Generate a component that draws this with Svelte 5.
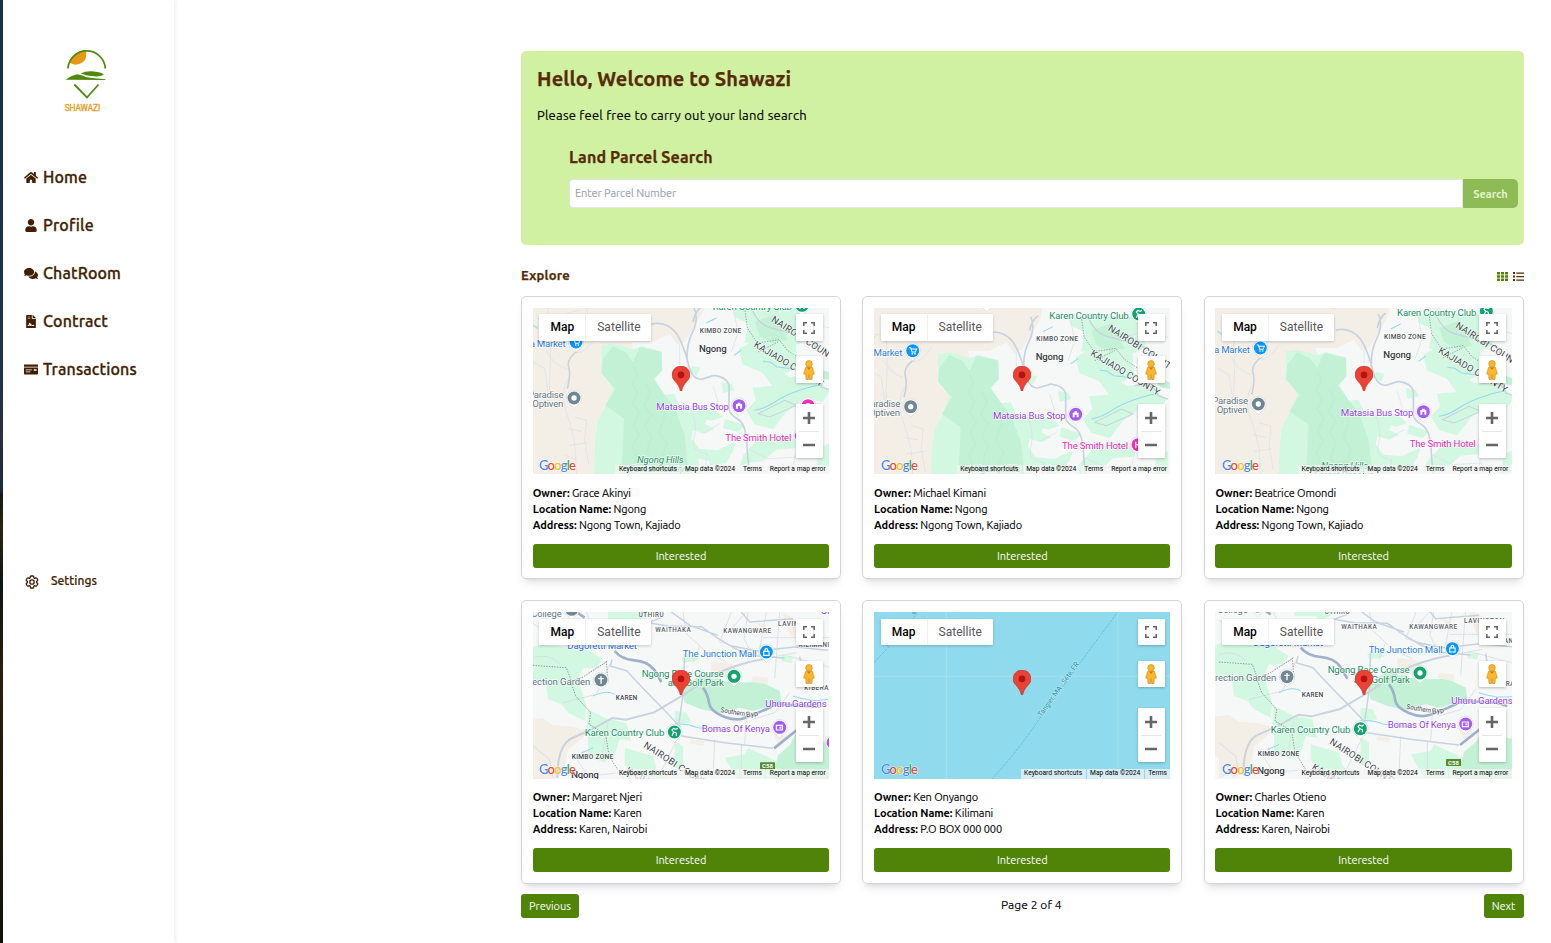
<script>
  const nav = [
    { id: 'home', label: 'Home' },
    { id: 'user', label: 'Profile' },
    { id: 'chat', label: 'ChatRoom' },
    { id: 'file', label: 'Contract' },
    { id: 'card', label: 'Transactions' }
  ];
  const parcels = [
    { owner: 'Grace Akinyi', place: 'Ngong', address: 'Ngong Town, Kajiado', map: 'ngong', dx: 0, dy: 0 },
    { owner: 'Michael Kimani', place: 'Ngong', address: 'Ngong Town, Kajiado', map: 'ngong', dx: -13, dy: 26 },
    { owner: 'Beatrice Omondi', place: 'Ngong', address: 'Ngong Town, Kajiado', map: 'ngong', dx: 7, dy: 18 },
    { owner: 'Margaret Njeri', place: 'Karen', address: 'Karen, Nairobi', map: 'karen', dx: 0, dy: 0 },
    { owner: 'Ken Onyango', place: 'Kilimani', address: 'P.O BOX 000 000', map: 'sea', dx: 0, dy: 0 },
    { owner: 'Charles Otieno', place: 'Karen', address: 'Karen, Nairobi', map: 'karen', dx: 12, dy: -10 }
  ];
</script>

{#snippet poi(x, y, color, kind)}
  <g transform="translate({x} {y})">
    <path d="M0 31L-15 17A23 23 0 1 1 15 17Z" fill="#fff" stroke="#c8ccd0" stroke-width="1.5" />
    <circle r="19.5" fill={color} />
    {#if kind === 'cart'}
      <path d="M-11-9h5l4 13h10l4-9H-4" fill="none" stroke="#fff" stroke-width="3" /><circle cx="-1" cy="9" r="2.5" fill="#fff" /><circle cx="7" cy="9" r="2.5" fill="#fff" />
    {:else if kind === 'dot'}
      <circle r="8" fill="#fff" />
    {:else if kind === 'house'}
      <path fill-rule="evenodd" d="M-9 9V-5h5v-4h8v4h5V9zM-3 9h6V1h-6z" fill="#fff" />
    {:else if kind === 'golf'}
      <path d="M-7 11L-2 0l-5-6 4-5 8 3 5-4M-1 0l7 3v8" fill="none" stroke="#fff" stroke-width="3.5" />
    {:else if kind === 'lock'}
      <path d="M-8-2H8V10H-8zM-4-2v-4a4 4 0 0 1 8 0v4" fill="none" stroke="#fff" stroke-width="3.5" />
    {:else if kind === 'cross'}
      <path d="M0-11V11M-8-4H8" stroke="#fff" stroke-width="4" />
    {:else if kind === 'hotel'}
      <path d="M-7-9V9M7-9V9M-7 0H7" stroke="#fff" stroke-width="4" />
    {:else}
      <path d="M-10-6H8V8H-10z" fill="none" stroke="#fff" stroke-width="3.5" /><circle cx="2" cy="1" r="3" fill="#fff" />
    {/if}
  </g>
{/snippet}

{#snippet ngong()}
  <rect x="-100" y="-100" width="1200" height="800" fill="#f6f7f7" />
  <path d="M-50-50H575L558 52 528 105 500 150 478 158 455 125 405 150H340L346 172 285 163 248 200 252 250 288 292 258 345 236 400 226 700H-50Z" fill="#f4efe6" />
  <path d="M250 160L285 155 345 172 372 163 430 178 433 235 410 262 440 308 468 305 485 340 520 350 570 372 560 395 590 410 560 425 525 415 520 440 545 470 600 475 650 450 645 480 605 512 540 500 560 600 226 600 232 440 238 390 260 345 285 290 250 240Z" fill="#d3f8e2" />
  <path d="M285 163L322 180 345 210 365 165 431 180 432 235 406 262 440 308 470 345 500 430 517 600H308L318 380 262 340 292 290 250 245 254 200Z" fill="#c3f1d5" />
  <g fill="none" stroke="#b9eacd" stroke-width="6" opacity=".4">
    <path d="M345 222l12 25-15 30 18 25-16 32 20 28-18 36 17 30-20 35 20 60M382 275l15 30-18 35 22 30-20 32 20 35-16 40 22 45M425 330l15 40-16 50 22 35-18 50" />
  </g>
  <g fill="#d3f8e2">
    <path d="M642 48H835L870 76 870 145 833 158 840 225 800 245 755 210 710 155 680 152 690 95 650 75Z" />
    <path d="M663 170l35-20 40 18 32 55 45 32 60-5 60 45-20 35-55-10-55 40-40 52-55-15-25-42 28-30-10-38 60-5-30-40-60-25Z" />
    <path d="M522 222l25 5-12 25-20-15zM540 345l50 10 25 20-35 12-40-15zM620 380l60 20-20 20-45-12zM675 490l50-55 50-10 70 18-10 25-60 5-40 35-45 5-25 12z" />
    <path d="M575 498l35-30 45-15-30 60-50 10zM905 470l35-20v70l-45 10zM610 270l30 5 10 20-35 8z" />
  </g>
  <g fill="#c3f1d5"><path d="M710 90l60-22 40 75-45 10-40-20zM900 230l45 15v20l-30-5z" /></g>
  <g fill="none" stroke="#dadee6" stroke-width="2">
    <path d="M45 100q40 10 70-15t70-30M145 230q-40-12-60-55M150 260q-25 40-8 90t28 100l8 130M172 375l34 10-6 60 12 70M150 410l40 8M155 460l55-8M140 490l35 12M45 210l35 20 10 70M90 48l8 120-4 130M205 48l15 60-40 40M230 140q-35 55-60 40M485 155v70M520 350q20 50 8 90t40 45l-10 60M560 420l45-25M600 330l-15-50M810 110l60-20 70 20M690 470l60 30 90-5M820 546l20-90M640 180l20-60-15-75" />
  </g>
  <g fill="none" stroke="#c8d3df" stroke-width="5">
    <path d="M180 175q-35 25-28 50t-4 65M400 97q25-8 50 5t40 50 20 60q10 50 40 50l38-12q40 5 45 30l0 70q0 15 25 30t28 70 9 90M508 212q-5-50 15-90t5-74M525 90q5-30 25-45" />
    <path d="M700 48q20 50 60 60t90 25 40 35M840 255q60-10 70 30l30 10" stroke-width="4" />
  </g>
  <g fill="none" stroke="#94daec" stroke-width="3">
    <path d="M710 355q30-5 60-25t75-35 65-15M45 100l15 10M565 93l30-15M648 190l22-16M735 208l22 3 20 14 60 7" />
  </g>
  <path d="M680 48l8 60 30 45 65-10 25 32 45 30M720 180l60-30" fill="none" stroke="#8b8f92" stroke-width="2.5" stroke-dasharray="4 4" />
  <path d="M720 365l80-40 35 15-80 35Z" fill="none" stroke="#c8d3df" stroke-width="3" />
  <g class="lbl">
    <text x="545" y="122" font-size="20" font-weight="500" fill="#4b5157" textLength="125">KIMBO ZONE</text>
    <text x="543" y="179" font-size="29" font-weight="500" fill="#33383d" textLength="83">Ngong</text>
    <text x="35" y="165" font-size="29" fill="#2b7de0" textLength="108">a Market</text>
    <text x="30" y="319" font-size="29" fill="#617582" textLength="107">Paradise</text>
    <text x="43" y="346" font-size="29" fill="#617582" textLength="93">Optiven</text>
    <text x="584" y="54" font-size="29" fill="#1b8f64" textLength="238">Karen Country Club</text>
    <text x="415" y="354" font-size="29" fill="#9544dd" textLength="218">Matasia Bus Stop</text>
    <text x="622" y="446" font-size="29" fill="#e62ab5" textLength="198">The Smith Hotel</text>
    <text x="357" y="514" font-size="29" font-style="italic" fill="#249069" textLength="140">Ngong Hills</text>
    <text x="335" y="541" font-size="29" font-style="italic" fill="#249069" textLength="180">Forest Reserve</text>
    <text transform="translate(758 87) rotate(33)" font-size="28" fill="#41474d" textLength="236">NAIROBI COUNTY</text>
    <text transform="translate(706 163) rotate(31)" font-size="28" fill="#41474d" textLength="236">KAJIADO COUNTY</text>
  </g>
  {@render poi(174, 150, '#0795ff', 'cart')}
  {@render poi(168, 318, '#6f8793', 'dot')}
  {@render poi(852, 40, '#12a36f', 'golf')}
  {@render poi(663, 341, '#a45cf5', 'house')}
  {@render poi(850, 432, '#f12fbd', 'hotel')}
  {@render poi(397, 2, '#f12fbd', 'dot')}
  {@render poi(870, 341, '#f12fbd', 'dot')}
{/snippet}

{#snippet karen()}
  <rect x="-100" y="-100" width="1200" height="800" fill="#f6f7f7" />
  <g fill="#d3f8e2">
    <path d="M30 160L65 145 150 155 215 165 255 190 235 215 195 215 180 250 205 330 200 375 150 350 130 325 90 310 85 270 30 245Z" />
    <path d="M270 30h70v40h-70zM325 55l60-20 20 15-55 40zM490 185l45-12 5 20-45 8zM790 175l35 8-5 18-30-5zM210 340l60 30 55 10 15 55-35-5-20 65-60-30 20-50-40-20zM210 420l45-20 40 60-35 40-50-20z" />
    <path d="M320 455l85 25 10 38 40 40h-90l-45-55zM470 345l35 5 15 30-50 5zM470 435l25 15 0 50-20 20-15-25 10-20zM620 485l60-10 100 20 60 60h-180zM690 455l75 35-20 10-65-25z" />
  </g>
  <path d="M490 278L550 235 590 245 640 260 730 258 785 285 790 320 705 345 665 335 610 352 550 340 500 320Z" fill="#c3f1d5" />
  <path d="M848 385l40-12v55l45 15v130H758l22-95 35-30Z" fill="#c3f1d5" />
  <g fill="#f4efe6">
    <path d="M30 372l45-5 30 20 60 5 50 15-65 55-12 70-50 25-58-75ZM45 430l40 20 40 85-80 20zM580 250l0-55 60 8 20 25-30 15zM715 78l30 10-15 12zM790 48l60 30 5 50-40-10zM705 240l45 5v20l-50-8zM520 430l40 5-5 15-40-8zM760 405l50 20-30 15z" />
  </g>
  <g fill="none" stroke="#d5dae4" stroke-width="2.3">
    <path d="M45 82l50 35 50-18M205 48l12 30M495 48l10 65 60 55 60 30M630 110l55-62M640 48l-35 90 90 25M690 48l-12 80 30 60M745 48l-20 110M785 48l-15 200M45 185q50-15 80 20M220 90l-5 70M270 195l-60 35M275 205l-40 90-100 25M545 150l-20 50M725 190l110-20M735 125h200M670 445l0 100M480 385l-10 60-45 90M590 430l-5 115M685 355l-5 90M170 480l40 60 100-10M270 380l-20 110M815 290l-45 60-65 20M810 180l130 35M45 450l50 40 10 56" />
  </g>
  <g fill="none" stroke="#c8d3df" stroke-width="4.500">
    <path d="M282 190l-5 20 50 15q45 50 105 110l55 58M500 175l-5 120-12 85M430 65l-40 15 60 10 100 2 50 35 50 30 60 22 90 8M460 48l55 40 85 30M640 150l80 15 110-12 100 10M490 420l130 20 145 17" />
    <path d="M670 48l25 30 130-10M845 182l10 70 80 30" />
    <path d="M118 546q0-100 45-120t65-30l55-30 40 5 85-22 85-50 55-37q75-55 200-75" stroke-width="6" />
  </g>
  <g fill="none" stroke="#9fb0cc" stroke-width="8">
    <path d="M178 50l22 15M290 165q20 25 60 28t60 30l20 35M555 275q15 20 18 45t40 40 60 8 75-30 30-18 100 10l32 10M768 457l75-60 18-18" />
  </g>
  <g fill="none" stroke="#777" stroke-width="2.3" stroke-dasharray="4 4">
    <path d="M45 208l100 7 15 40 35-12 70-45M155 250l18 50 45 50-5 35 50 30 10 65 45 70M265 195l5 60" />
  </g>
  <path d="M225 300q40-20 65-5M470 385q35-5 70 10l80 8M190 470q20-5 35-15M825 300q60 20 105 10" fill="none" stroke="#94daec" stroke-width="3" />
  <g class="lbl">
    <text x="40" y="62" font-size="28" fill="#617582" textLength="91">College</text>
    <text x="362" y="63" font-size="19" font-weight="500" fill="#5a6066" textLength="75">UTHIRU</text>
    <text x="412" y="108" font-size="19" font-weight="500" fill="#5a6066" textLength="106">WAITHAKA</text>
    <text x="616" y="110" font-size="19" font-weight="500" fill="#5a6066" textLength="143">KAWANGWARE</text>
    <text x="780" y="90" font-size="19" font-weight="500" fill="#5a6066" textLength="120">LAVINGTON</text>
    <text x="842" y="152" font-size="19" font-weight="500" fill="#5a6066" textLength="92">KILIMANI</text>
    <text x="859" y="281" font-size="19" font-weight="500" fill="#5a6066" textLength="72">KIBERA</text>
    <text x="293" y="312" font-size="20" font-weight="500" fill="#41474d" textLength="65">KAREN</text>
    <text x="161" y="490" font-size="20" font-weight="500" fill="#41474d" textLength="125">KIMBO ZONE</text>
    <text x="160" y="545" font-size="29" font-weight="500" fill="#33383d" textLength="82">Ngong</text>
    <text x="148" y="160" font-size="29" fill="#2b6fe0" textLength="209">Dagoretti Market</text>
    <text x="494" y="182" font-size="29" fill="#2b7de0" textLength="222">The Junction Mall</text>
    <text x="33" y="266" font-size="29" fill="#617582" textLength="184">rection Garden</text>
    <text x="371" y="242" font-size="29" fill="#1b8f64" textLength="246">Ngong Race Course</text>
    <text x="449" y="270" font-size="29" fill="#1b8f64" textLength="169">and Golf Park</text>
    <text x="200" y="421" font-size="29" fill="#1b8f64" textLength="239">Karen Country Club</text>
    <text x="551" y="407" font-size="29" fill="#9544dd" textLength="205">Bomas Of Kenya</text>
    <text x="742" y="333" font-size="29" fill="#9544dd" textLength="184">Uhuru Gardens</text>
    <text x="909" y="53" font-size="29" fill="#9544dd">Uni</text>
    <text transform="translate(607 348) rotate(10)" font-size="21" fill="#41474d" textLength="74" lengthAdjust="spacingAndGlyphs">Southern</text>
    <text transform="translate(685 363) rotate(-7)" font-size="21" fill="#41474d" textLength="36">Byp</text>
    <text transform="translate(375 452) rotate(33)" font-size="28" fill="#41474d" textLength="236">NAIROBI COUNTY</text>
    <text transform="translate(322 528) rotate(31)" font-size="28" fill="#41474d" textLength="236">KAJIADO COUNTY</text>
  </g>
  <rect x="726" y="499" width="45" height="21" rx="2" fill="#568a2f" />
  <text x="732" y="516" font-size="18" font-weight="700" fill="#fff">C58</text>
  {@render poi(161, 40, '#6f8793', 'dot')}
  {@render poi(745, 168, '#0795ff', 'lock')}
  {@render poi(249, 252, '#6f8793', 'cross')}
  {@render poi(648, 241, '#12a36f', 'dot')}
  {@render poi(469, 408, '#12a36f', 'golf')}
  {@render poi(785, 394, '#a45cf5', 'cam')}
  {@render poi(945, 440, '#a45cf5', 'dot')}
{/snippet}

{#snippet sea()}
  <rect x="0" y="0" width="1000" height="600" fill="#90daee" />
  <path d="M262 40V560M776 40V560M40 241H940" stroke="#a7dfeb" stroke-width="3" />
  <path d="M400 548Q480 460 540 370L665 198 776 48M45 200L120 120 175 50" fill="none" stroke="#55b9d6" stroke-width="2.2" stroke-dasharray="9 3" />
  <text transform="translate(547 364) rotate(-54.5)" font-size="22" fill="#2692ae" stroke="#b6e7f1" stroke-width="4" paint-order="stroke" textLength="196">Tangier, MA - Sète, FR</text>
  <text x="158" y="54" font-size="18" fill="#2692ae">G</text>
{/snippet}

<div class="page">
  <div class="edge"></div>
  <aside>
    <svg class="logo" viewBox="50 40 70 80" width="70" height="80">
      <path d="M69 62.500A18.700 18.700 0 0 1 85.500 50.200Q88 57.500 83 62 76 67 69 62.500Z" fill="#e69812" />
      <path d="M68 68.500A18.660 18.200 0 0 1 105.300 68.500" fill="none" stroke="#4f8a0b" stroke-width="1.7" />
      <path d="M80.500 73.500Q87 70.500 94 71.500 101 72 104 74.500 100 77 94 76.300 87 76 80.500 73.500ZM65.500 79.800Q71 75.500 77 74.300 82 74.800 86 77 94 78.600 105.500 79.200V79.900Z" fill="#4f8a0b" />
      <path d="M74.300 84.500L87 97.500 98.500 84.500" fill="none" stroke="#4f8a0b" stroke-width="1.8" />
      <text x="64.700" y="111.300" font-family="Roboto, sans-serif" font-size="8.600" fill="#e69812" stroke="#e69812" stroke-width=".3" textLength="35.500" lengthAdjust="spacingAndGlyphs">SHAWAZI</text>
    </svg>
    <nav>
      {#each nav as item}
        <a href="#{item.id}">
          {#if item.id === 'home'}
            <svg viewBox="0 0 576 512"><path d="M280.370 148.260L96 300.110V464a16 16 0 0 0 16 16l112.060-.29a16 16 0 0 0 15.920-16V368a16 16 0 0 1 16-16h64a16 16 0 0 1 16 16v95.640a16 16 0 0 0 16 16.050L464 480a16 16 0 0 0 16-16V300L295.670 148.260a12.190 12.190 0 0 0-15.300 0zM571.600 251.470L488 182.560V44.050a12 12 0 0 0-12-12h-56a12 12 0 0 0-12 12v72.610L318.470 43a48 48 0 0 0-61 0L4.340 251.470a12 12 0 0 0-1.600 16.900l25.500 31A12 12 0 0 0 45.150 301l235.220-193.740a12.190 12.190 0 0 1 15.300 0L530.900 301a12 12 0 0 0 16.900-1.600l25.500-31a12 12 0 0 0-1.700-16.930z" /></svg>
          {:else if item.id === 'user'}
            <svg viewBox="0 0 448 512"><path d="M224 256c70.700 0 128-57.300 128-128S294.700 0 224 0 96 57.300 96 128s57.300 128 128 128zm89.600 32h-16.700c-22.200 10.200-46.900 16-72.900 16s-50.600-5.800-72.900-16h-16.700C60.200 288 0 348.200 0 422.400V464c0 26.500 21.500 48 48 48h352c26.500 0 48-21.500 48-48v-41.600c0-74.200-60.200-134.400-134.400-134.400z" /></svg>
          {:else if item.id === 'chat'}
            <svg viewBox="0 0 576 512"><path d="M416 192c0-88.400-93.100-160-208-160S0 103.600 0 192c0 34.300 14.100 65.900 38 92-13.400 30.200-35.500 54.200-35.800 54.500-2.200 2.300-2.800 5.700-1.500 8.700S4.800 352 8 352c36.600 0 66.900-12.300 88.700-25 32.200 15.700 70.300 25 111.300 25 114.900 0 208-71.600 208-160zm122 220c23.900-26 38-57.700 38-92 0-66.900-53.500-124.200-129.300-148.100.9 6.600 1.300 13.300 1.300 20.100 0 105.900-107.700 192-240 192-10.800 0-21.300-.8-31.700-1.900C207.800 439.600 281.800 480 368 480c41 0 79.100-9.200 111.300-25 21.800 12.700 52.100 25 88.700 25 3.200 0 6.100-1.900 7.300-4.800 1.300-2.900.7-6.300-1.500-8.700-.3-.3-22.400-24.200-35.800-54.500z" /></svg>
          {:else if item.id === 'file'}
            <svg viewBox="0 0 384 512"><path fill-rule="evenodd" d="M224 136V0H24C10.700 0 0 10.700 0 24v464c0 13.300 10.700 24 24 24h336c13.300 0 24-10.700 24-24V160H248c-13.200 0-24-10.800-24-24zM64 64h96v24H64zM64 128h96v24H64zM64 430v-32h30l30-92h36l24 60 30 4 22 28h84v32h-100l-26-32-16 32h-40l-24-48-16 48z" /><path d="M377 105L279.100 7c-4.500-4.500-10.600-7-17-7H256v128h128v-6.100c0-6.300-2.500-12.400-7-16.900z" /></svg>
          {:else}
            <svg viewBox="0 0 640 512"><path fill-rule="evenodd" d="M0 448c0 17.700 14.300 32 32 32h576c17.700 0 32-14.300 32-32V160H0zm448-208h128v72H448zm-368 16h280v32H80zm0 96h210v32H80zM624 32H16C7.200 32 0 39.200 0 48v80h640V48c0-8.800-7.200-16-16-16z" /></svg>
          {/if}
          <span>{item.label}</span>
        </a>
      {/each}
    </nav>
    <a class="settings" href="#settings">
      <svg viewBox="0 0 24 24" fill="none" stroke="currentColor" stroke-width="2"><path d="M9.594 3.940c.09-.542.56-.94 1.110-.94h2.593c.55 0 1.020.398 1.110.94l.213 1.281c.063.374.313.686.645.87.074.04.147.083.22.127.325.196.72.257 1.075.124l1.217-.456a1.125 1.125 0 0 1 1.370.49l1.296 2.247a1.125 1.125 0 0 1-.26 1.431l-1.003.827c-.293.241-.438.613-.43.992a7.723 7.723 0 0 1 0 .255c-.008.378.137.75.43.991l1.004.827c.424.35.534.955.26 1.430l-1.298 2.247a1.125 1.125 0 0 1-1.369.491l-1.217-.456c-.355-.133-.75-.072-1.076.124a6.470 6.470 0 0 1-.22.128c-.331.183-.581.495-.644.869l-.213 1.281c-.09.543-.56.94-1.110.94h-2.594c-.55 0-1.019-.398-1.110-.94l-.213-1.281c-.062-.374-.312-.686-.644-.87a6.520 6.520 0 0 1-.22-.127c-.325-.196-.72-.257-1.076-.124l-1.217.456a1.125 1.125 0 0 1-1.369-.49l-1.297-2.247a1.125 1.125 0 0 1 .26-1.431l1.004-.827c.292-.24.437-.613.43-.991a6.932 6.932 0 0 1 0-.255c.007-.38-.138-.751-.43-.992l-1.004-.827a1.125 1.125 0 0 1-.26-1.430l1.297-2.247a1.125 1.125 0 0 1 1.370-.491l1.216.456c.356.133.751.072 1.076-.124.072-.044.146-.086.22-.128.332-.183.582-.495.644-.869l.214-1.280Z" /><circle cx="12" cy="12" r="3.300" /></svg>
      <span>Settings</span>
    </a>
  </aside>

  <main>
    <section class="banner">
      <h1>Hello, Welcome to Shawazi</h1>
      <p>Please feel free to carry out your land search</p>
      <h2>Land Parcel Search</h2>
      <div class="search">
        <input placeholder="Enter Parcel Number" />
        <button>Search</button>
      </div>
    </section>

    <div class="explore">
      <h3>Explore</h3>
      <div class="views">
        <svg width="11" height="9" viewBox="0 0 11 9" fill="#4f8409"><path d="M0 0h3v2.500H0zM4 0h3v2.500H4zM8 0h3v2.500H8zM0 3.250h3v2.500H0zM4 3.250h3v2.500H4zM8 3.250h3v2.500H8zM0 6.500h3V9H0zM4 6.500h3V9H4zM8 6.500h3V9H8z" /></svg>
        <svg width="11" height="9" viewBox="0 0 11 9" fill="#562b05"><path d="M0 0h2v2H0zM0 3.500h2v2H0zM0 7h2v2H0zM3.300.4H11v1.300H3.300zM3.300 3.900H11v1.300H3.300zM3.300 7.400H11v1.300H3.300z" /></svg>
      </div>
    </div>

    <div class="grid">
      {#each parcels as p}
        <article>
          <div class="map">
            <svg class="terrain" viewBox="45 48 889 500" preserveAspectRatio="xMinYMin slice">
              <g transform="translate({p.dx} {p.dy})">
                {#if p.map === 'ngong'}{@render ngong()}{:else if p.map === 'karen'}{@render karen()}{:else}{@render sea()}{/if}
              </g>
            </svg>
            <svg class="pin" viewBox="0 0 27 38"><path d="M13.500 0C5.800 0 0 6 0 13.300 0 22 10.500 25 12.300 37q1.200 2 2.400 0C16.500 25 27 22 27 13.300 27 6 21.200 0 13.500 0Z" fill="#ea4335" stroke="#c5221f" stroke-width=".8" /><circle cx="13.500" cy="13.300" r="5" fill="#b31412" /></svg>
            <div class="types"><b>Map</b><span>Satellite</span></div>
            <div class="ctl full"><svg width="12" height="12" viewBox="0 0 12 12" fill="none" stroke="#666" stroke-width="1.600"><path d="M.8 4V.8H4M8 .8h3.200V4M11.200 8v3.200H8M4 11.200H.8V8" /></svg></div>
            <div class="ctl peg"><svg width="12" height="20" viewBox="0 0 12 20" fill="#fbb829" stroke="#c88514" stroke-width=".6"><path d="M2.500 7.500Q6 5.500 9.500 7.500L11.300 14 9.300 14.500 9 19.500H6.500V15h-1v4.500H3L2.700 14.500.7 14Z" /><circle cx="6" cy="3.800" r="3.300" /><path d="M4 7.500h4L6 10z" fill="#e8701a" stroke="none" /></svg></div>
            <div class="ctl zoom"><svg width="27" height="54" viewBox="0 0 27 54"><path d="M7 14h12M13 8v12M7 41h12" stroke="#666" stroke-width="2.600" /><path d="M3 27.500h20" stroke="#e6e6e6" /></svg></div>
            <svg class="google" width="40" height="16" viewBox="0 0 40 16"><text y="11.500" stroke="#fff" stroke-opacity=".7" stroke-width="1" paint-order="stroke" font-size="13" font-weight="500" font-family="Lato, sans-serif" textLength="37"><tspan fill="#4285f4">G</tspan><tspan fill="#ea4335">o</tspan><tspan fill="#fbbc04">o</tspan><tspan fill="#4285f4">g</tspan><tspan fill="#34a853">l</tspan><tspan fill="#ea4335">e</tspan></text></svg>
            <div class="legal">
              <span>Keyboard shortcuts</span><span>Map data ©2024</span><span>Terms</span>{#if p.map !== 'sea'}<span>Report a map error</span>{/if}
            </div>
          </div>
          <dl>
            <div><dt>Owner:</dt> <dd>{p.owner}</dd></div>
            <div><dt>Location Name:</dt> <dd>{p.place}</dd></div>
            <div><dt>Address:</dt> <dd>{p.address}</dd></div>
          </dl>
          <button>Interested</button>
        </article>
      {/each}
    </div>

    <footer>
      <button class="prev">Previous</button>
      <span>Page 2 of 4</span>
      <button class="next">Next</button>
    </footer>
  </main>
</div>

<style>
  :global(body) { margin: 0; background: #fff; }
  * { box-sizing: border-box; }
  .page { display: flex; height: 943px; overflow: hidden; font-family: Ubuntu, "Noto Sans", sans-serif; color: #000; }
  .edge { width: 3px; background: linear-gradient(#17304c 0, #1c3550 38%, #2c3040 46%, #1d2b40 52%, #171b16 52.500%, #29260f 56%, #0f1514 62%, #2a210b 72%, #12120d 100%); }
  aside { width: 171px; background: #fff; box-shadow: 1px 0 5px rgba(0, 0, 0, .08); display: flex; flex-direction: column; }
  .logo { margin: 40px 0 0 47px; flex: none; }
  nav { margin-top: 45px; display: flex; flex-direction: column; gap: 24px; padding-left: 21px; }
  nav a { height: 24px; display: flex; align-items: center; color: #401f03; text-decoration: none; font-size: 16px; font-weight: 500; line-height: 24px; white-space: nowrap; }
  nav svg { width: 14px; height: 13px; margin: 1px 5px 0 0; fill: currentColor; }
  nav span { letter-spacing: .13px; -webkit-text-stroke: .3px currentColor; }
  .settings { display: flex; align-items: center; height: 20px; margin: 189px 0 0 21px; color: #401f03; text-decoration: none; font-size: 12px; font-weight: 500; }
  .settings svg { width: 16px; height: 16px; margin: 3px 11px 0 0; }
  .settings span { -webkit-text-stroke: .2px currentColor; letter-spacing: .05px; }
  main { width: 1002.600px; margin: 51px 0 0 347px; flex: none; }
  .banner { height: 194px; background: #d0f1a2; border-radius: 5px; padding: 14px 5.600px 0 16px; }
  h1, h2, h3, p, dl, dd { margin: 0; }
  h1, h2, h3 { color: #562b05; font-weight: 700; -webkit-text-stroke: .25px currentColor; }
  h1 { font-size: 20px; line-height: 28px; letter-spacing: .14px; }
  p { font-size: 13px; line-height: 20px; margin-top: 12px; letter-spacing: .22px; -webkit-text-stroke: .15px currentColor; }
  h2 { font-size: 16px; line-height: 24px; margin: 20px 0 0 32px; letter-spacing: .13px; }
  .search { display: flex; height: 29px; margin: 10px 0 0 32px; }
  input { flex: 1; min-width: 0; border: 1px solid #e2e5e9; border-radius: 4px 0 0 4px; padding: 0 5px 2px; font: 11px Ubuntu, "Noto Sans", sans-serif; letter-spacing: -.08px; }
  input::placeholder { color: #9ca3af; -webkit-text-stroke: .12px currentColor; }
  button { border: 0; padding: 0; font: 11px Ubuntu, "Noto Sans", sans-serif; color: #fff; background: #4f8409; border-radius: 3px; letter-spacing: -.06px; }
  .search button { width: 55px; border-radius: 0 5px 5px 0; background: #8fbb56; color: #e1f5c8; font-weight: 700; }
  .explore { display: flex; justify-content: space-between; align-items: center; height: 20px; margin: 20px 0 11px; }
  h3 { font-size: 13px; line-height: 20px; letter-spacing: .25px; }
  .views { display: flex; gap: 5px; padding-top: 3px; }
  .grid { display: grid; grid-template-columns: repeat(3, 1fr); gap: 21.100px 21.330px; }
  article { height: 283.300px; min-width: 0; border: 1px solid #d1d5db; border-radius: 5px; padding: 11px 10.800px; box-shadow: 0 7px 10px -3px rgba(0, 0, 0, .1), 0 3px 4px -3px rgba(0, 0, 0, .1); }
  .map { position: relative; height: 166.400px; overflow: hidden; font-family: Roboto, sans-serif; }
  .terrain { display: block; width: 100%; height: 100%; }
  .lbl { stroke: #fff; stroke-opacity: .75; stroke-width: 4px; paint-order: stroke; }
  .pin { position: absolute; left: 139.400px; top: 57.500px; width: 18px; height: 25.500px; }
  .types { position: absolute; left: 6.600px; top: 6.300px; height: 26.700px; display: flex; background: #fff; border-radius: 1px; box-shadow: 0 1px 3px rgba(0, 0, 0, .2); font-size: 12px; line-height: 27px; color: #565656; }
  .types b { width: 47px; text-align: center; font-weight: 500; color: #000; border-right: 1px solid #f0f0f0; }
  .types span { width: 65px; text-align: center; letter-spacing: .05px; }
  .ctl { position: absolute; right: 5.900px; width: 27px; height: 26.700px; background: #fff; border-radius: 1px; box-shadow: 0 1px 3px rgba(0, 0, 0, .25); display: flex; align-items: center; padding-left: 7px; }
  .full { top: 6.300px; }
  .peg { top: 48.300px; }
  .zoom { top: 96.100px; height: 54px; padding: 0; }
  .google { position: absolute; left: 6.700px; bottom: .7px; overflow: visible; }
  .legal { position: absolute; right: 0; bottom: -.4px; height: 10px; display: flex; gap: 1px; font-size: 6.700px; line-height: 9.500px; color: #000; white-space: nowrap; }
  .legal span { background: rgba(245, 245, 245, .7); padding: 0 3.500px; }
  dl { font-size: 11px; line-height: 16px; margin-top: 10.600px; letter-spacing: -.12px; }
  dl div { height: 16px; white-space: nowrap; }
  dt, dd { display: inline; }
  dt { font-weight: 700; }
  dd { -webkit-text-stroke: .1px currentColor; }
  article > button { display: block; width: 100%; height: 24px; margin-top: 11px; }
  footer { display: flex; justify-content: space-between; align-items: center; height: 24px; margin-top: 10.300px; font-size: 12px; }
  footer button { height: 24px; }
  footer span { letter-spacing: .05px; padding-bottom: 2px; -webkit-text-stroke: .1px currentColor; }
  .prev { width: 58px; }
  .next { width: 40px; }
</style>
